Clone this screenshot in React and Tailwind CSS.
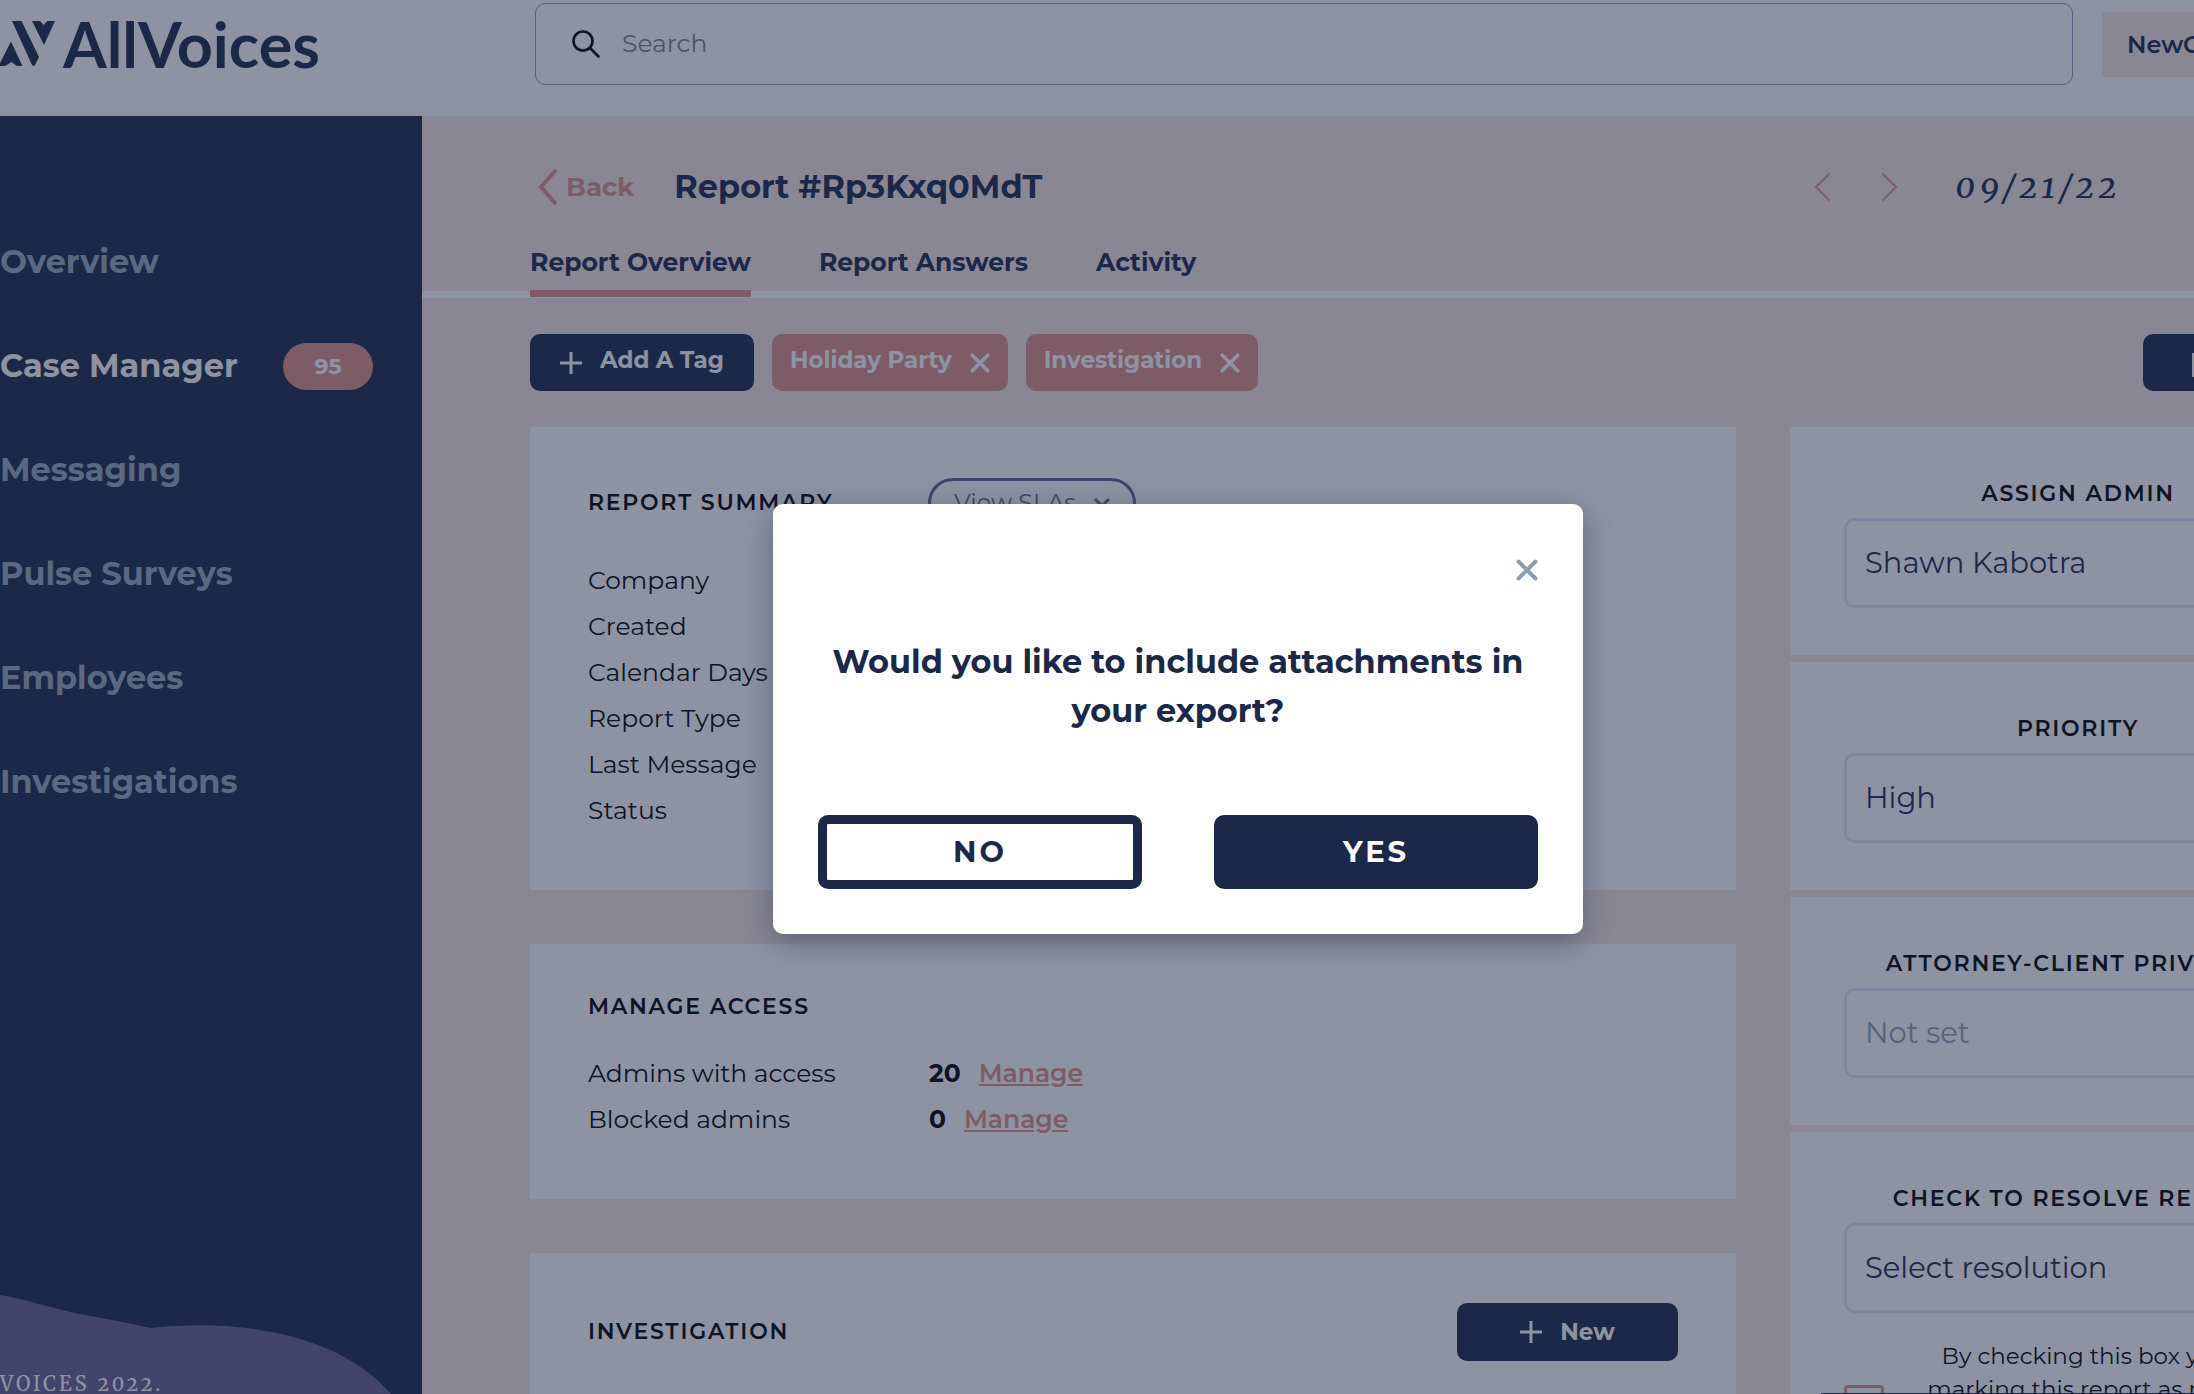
import { useState } from "react";

const navItems = [
  { label: "Overview" },
  { label: "Case Manager", count: 95, active: true },
  { label: "Messaging" },
  { label: "Pulse Surveys" },
  { label: "Employees" },
  { label: "Investigations" },
];

const tabs = ["Report Overview", "Report Answers", "Activity"];

const summaryRows = [
  "Company",
  "Created",
  "Calendar Days",
  "Report Type",
  "Last Message",
  "Status",
];

const accessRows = [
  { label: "Admins with access", value: 20 },
  { label: "Blocked admins", value: 0 },
];

function PlusIcon() {
  return (
    <svg viewBox="0 0 22 22" className="h-[22px] w-[22px]" aria-hidden="true">
      <path d="M11 0V22M0 11H22" stroke="currentColor" strokeWidth="3" />
    </svg>
  );
}

function CrossIcon({ className }) {
  return (
    <svg
      viewBox="0 0 22 22"
      className={className}
      fill="none"
      stroke="currentColor"
      strokeWidth="4"
      strokeLinecap="round"
      aria-hidden="true"
    >
      <path d="M2.5 2.5L19.5 19.5M19.5 2.5L2.5 19.5" />
    </svg>
  );
}

function Logo() {
  return (
    <a href="#home" className="flex items-center gap-2 text-[#1c2848]">
      <svg
        viewBox="0 0 55 45"
        className="h-[45px] w-[55px]"
        fill="currentColor"
        aria-hidden="true"
      >
        <path d="M0 42L11 20.5L22.5 45H17L11.5 41L5 45H0Z" />
        <path d="M12 0H21.5L39 36L35 44Q33.500 46 32 44Z" />
        <path d="M32 0H40L43.500 4L47.500 0H55L44 24Z" />
      </svg>
      <span className="font-['Lato'] text-[63px] leading-none font-bold">
        AllVoices
      </span>
    </a>
  );
}

function Header() {
  return (
    <header className="flex h-[116px] shrink-0 bg-white">
      <div className="w-[535px] shrink-0 pt-3">
        <Logo />
      </div>
      <label className="mt-[3px] flex h-[82px] grow items-center gap-[22px] rounded-[10px] border border-[#8b9db5] pl-9">
        <svg
          viewBox="0 0 28 28"
          className="h-7 w-7"
          fill="none"
          stroke="#000"
          strokeWidth="2.6"
          aria-hidden="true"
        >
          <circle cx="11" cy="11" r="9.5" />
          <path d="M18 18L26.500 26.500" strokeLinecap="round" />
        </svg>
        <input
          type="search"
          aria-label="Search"
          placeholder="Search"
          className="grow text-[25px] outline-none placeholder:text-[#808080]"
        />
      </label>
      <button
        type="button"
        className="mt-3 -mr-[120px] ml-[29px] h-[65px] w-[212px] shrink-0 rounded bg-[#f6e6e0] pl-[25px] text-left text-2xl font-semibold text-[#1c2848]"
      >
        NewCo
      </button>
    </header>
  );
}

function Sidebar() {
  return (
    <aside className="relative w-[422px] shrink-0 overflow-hidden bg-[#1c2848] pt-[94px]">
      <nav>
        {navItems.map((item) => (
          <a
            key={item.label}
            href={"#" + item.label}
            className={
              "flex h-[104px] items-center justify-between pr-[49px] text-[32px] font-bold " +
              (item.active ? "text-white" : "text-[#98a8bc]")
            }
          >
            {item.label}
            {item.count && (
              <span className="flex h-[47px] w-[90px] items-center justify-center rounded-full bg-[#de9088] text-[22px]">
                {item.count}
              </span>
            )}
          </a>
        ))}
      </nav>

      {/* Purple wave behind the copyright */}
      <div className="absolute inset-x-0 bottom-0 h-[99px]">
        <svg
          viewBox="0 0 422 99"
          className="absolute inset-0 h-full w-full"
          aria-hidden="true"
        >
          <path
            d="M0 0C30 5 50 13 80 19C105 24 130 28 150 33C255 22 345 45 391 99H0Z"
            fill="#6a6090"
          />
        </svg>
        <p className="absolute bottom-0 left-0 font-['Merriweather','Liberation_Serif',serif] text-xl leading-none tracking-[3px] text-white oldstyle-nums">
          VOICES 2022.
        </p>
      </div>
    </aside>
  );
}

function ReportHeader() {
  return (
    <div className="border-b-[7px] border-white pl-[108px]">
      <div className="flex h-[130px] items-center pt-3">
        <a
          href="#reports"
          className="ml-2 flex items-center gap-2 text-[26px] font-bold text-[#de9088]"
        >
          <svg
            viewBox="0 0 20 36"
            className="h-9 w-5"
            fill="none"
            stroke="currentColor"
            strokeWidth="4"
            aria-hidden="true"
          >
            <path d="M18 1L3 18L18 35" />
          </svg>
          Back
        </a>
        <h1 className="ml-10 text-[32px] font-bold text-[#1c2848]">
          Report #Rp3Kxq0MdT
        </h1>
        <div className="ml-auto flex items-center pr-[73px]">
          <button type="button" aria-label="Previous report" className="text-[#de9088]">
            <svg viewBox="0 0 16 28" className="h-7 w-4" fill="none" stroke="currentColor" strokeWidth="2" strokeLinecap="round">
              <path d="M15 1L2 14L15 27" />
            </svg>
          </button>
          <button type="button" aria-label="Next report" className="ml-[52px] text-[#de9088]">
            <svg viewBox="0 0 16 28" className="h-7 w-4" fill="none" stroke="currentColor" strokeWidth="2" strokeLinecap="round">
              <path d="M1 1L14 14L1 27" />
            </svg>
          </button>
          <time className="ml-[58px] font-['Merriweather','Liberation_Serif',serif] text-[32px] font-medium tracking-[5px] text-[#1c2848] italic oldstyle-nums">
            09/21/22
          </time>
        </div>
      </div>
      <div role="tablist" className="flex gap-[68px]">
        {tabs.map((tab, i) => (
          <button
            key={tab}
            type="button"
            role="tab"
            aria-selected={i === 0}
            className={
              "-mb-[6px] h-[51px] border-b-[7px] pb-3 text-[25px] leading-8 font-bold text-[#1c2848] " +
              (i === 0 ? "border-[#de9088]" : "border-transparent")
            }
          >
            {tab}
          </button>
        ))}
      </div>
    </div>
  );
}

function Tag({ label }) {
  return (
    <span className="flex h-[57px] items-center gap-[18px] rounded-[10px] bg-[#de9088] px-[18px] text-[23px] font-bold text-white">
      <span className="pb-1">{label}</span>
      <button type="button" aria-label={"Remove " + label}>
        <CrossIcon className="h-5 w-5" />
      </button>
    </span>
  );
}

function TagBar() {
  return (
    <div className="flex gap-[18px]">
      <button
        type="button"
        className="flex h-[57px] items-center gap-[18px] rounded-[10px] bg-[#1c2848] px-[30px] text-[23px] font-bold text-white"
      >
        <PlusIcon />
        <span className="pb-1">Add A Tag</span>
      </button>
      <Tag label="Holiday Party" />
      <Tag label="Investigation" />
      <button
        type="button"
        aria-label="Export"
        className="ml-auto h-[57px] w-[223px] rounded-[10px] bg-[#1c2848] pl-[49px] text-white"
      >
        <svg viewBox="0 0 24 24" className="mt-1 h-6 w-6" fill="none" stroke="currentColor" strokeWidth="3">
          <rect x="1" y="1" width="22" height="22" />
        </svg>
      </button>
    </div>
  );
}

function CardTitle({ children }) {
  return (
    <h2 className="text-[22px] leading-8 font-semibold tracking-[0.08em] text-black uppercase">
      {children}
    </h2>
  );
}

function SidePanel({ title, value, muted, children }) {
  return (
    <section className="bg-white px-[54px] pt-[51px] pb-[47px]">
      <label className="block text-center text-[22px] leading-8 font-semibold tracking-[0.08em] text-black uppercase">
        {title}
        <select
          className={
            "mt-2 block h-[90px] w-full appearance-none rounded-[10px] border-[3px] border-[#dee4f6] px-[18px] text-[29px] font-normal tracking-normal " +
            (muted ? "text-[#8b9db5]" : "text-[#1c2848]")
          }
        >
          <option>{value}</option>
        </select>
      </label>
      {children}
    </section>
  );
}

function Report() {
  return (
    <main className="min-w-0 grow bg-[#f6e6e0]">
      <ReportHeader />
      {/* Columns run past the right edge of the window */}
      <div className="-mr-[172px] pt-9 pl-[108px]">
        <TagBar />
        <div className="mt-9 flex gap-[54px]">
          <div className="flex min-w-0 grow flex-col gap-[54px]">
            <section className="bg-white px-[58px] pt-[51px] pb-[57px]">
              <div className="flex h-[50px] items-center">
                <div className="w-[340px]">
                  <CardTitle>Report Summary</CardTitle>
                </div>
                <button
                  type="button"
                  className="flex h-[50px] w-[208px] items-center justify-center gap-[18px] rounded-full border-[3px] border-[#6a6090] text-2xl text-[#6a6090]"
                >
                  View SLAs
                  <svg viewBox="0 0 16 10" className="h-[10px] w-4" fill="none" stroke="currentColor" strokeWidth="3">
                    <path d="M1 1L8 8L15 1" />
                  </svg>
                </button>
              </div>
              <dl className="mt-[29px] text-[25px] leading-[46px] text-black">
                {summaryRows.map((row) => (
                  <dt key={row}>{row}</dt>
                ))}
              </dl>
            </section>

            <section className="bg-white px-[58px] pt-[47px] pb-[57px]">
              <CardTitle>Manage Access</CardTitle>
              <dl className="mt-[27px] text-[25px] leading-[46px] text-black">
                {accessRows.map((row) => (
                  <div key={row.label} className="flex">
                    <dt className="w-[341px]">{row.label}</dt>
                    <dd className="flex gap-[18px]">
                      <b className="font-bold">{row.value}</b>
                      <a href="#manage" className="font-semibold text-[#de9088] underline">
                        Manage
                      </a>
                    </dd>
                  </div>
                ))}
              </dl>
            </section>

            <section className="flex items-center justify-between bg-white px-[58px] pt-[50px] pb-[60px]">
              <CardTitle>Investigation</CardTitle>
              <button
                type="button"
                className="flex h-[58px] w-[221px] items-center justify-center gap-[18px] rounded-[10px] bg-[#1c2848] text-[23px] font-bold text-white"
              >
                <PlusIcon />
                New
              </button>
            </section>
          </div>

          <div className="flex w-[576px] shrink-0 flex-col gap-[7px]">
            <SidePanel title="Assign Admin" value="Shawn Kabotra" />
            <SidePanel title="Priority" value="High" />
            <SidePanel title="Attorney-Client Privilege" value="Not set" muted />
            <SidePanel title="Check to Resolve Report" value="Select resolution">
              <label className="mt-[27px] flex items-start gap-4 text-center text-[23px] leading-[33px] text-black">
                <input
                  type="checkbox"
                  className="mt-[45px] h-10 w-10 shrink-0 appearance-none rounded border-[3px] border-[#de9088]"
                />
                <span className="grow">
                  By checking this box you are
                  <br />
                  marking this report as resolved
                </span>
              </label>
            </SidePanel>
          </div>
        </div>
      </div>
    </main>
  );
}

function ExportDialog({ onClose }) {
  return (
    <div className="absolute inset-0 flex items-center justify-center bg-[#1c2848]/50 pt-11 pl-[162px]">
      <div
        role="dialog"
        aria-modal="true"
        aria-labelledby="export-title"
        className="w-[810px] rounded-[10px] bg-white p-[45px] shadow-[0_8px_30px_rgba(28,40,72,0.4)]"
      >
        <div className="flex justify-end pt-[10px]">
          <button type="button" aria-label="Close" onClick={onClose} className="text-[#8b9db5]">
            <CrossIcon className="h-[22px] w-[22px]" />
          </button>
        </div>
        <h2
          id="export-title"
          className="mt-14 text-center text-[32px] leading-[49px] font-bold text-[#1c2848]"
        >
          Would you like to include attachments in your export?
        </h2>
        <div className="mt-20 flex gap-[72px] text-[29px] font-bold tracking-[3px]">
          <button
            type="button"
            onClick={onClose}
            className="h-[74px] flex-1 rounded-[10px] border-[9px] border-[#1c2848] text-[#1c2848]"
          >
            NO
          </button>
          <button
            type="button"
            onClick={onClose}
            className="h-[74px] flex-1 rounded-[10px] border-[9px] border-[#1c2848] bg-[#1c2848] text-white"
          >
            YES
          </button>
        </div>
      </div>
    </div>
  );
}

export default function App() {
  const [open, setOpen] = useState(true);

  return (
    <div className="relative flex h-screen flex-col overflow-hidden font-['Montserrat','Inter',sans-serif]">
      <Header />
      <div className="flex min-h-0 grow overflow-hidden">
        <Sidebar />
        <Report />
      </div>
      {/* Top edge of the docked chat bar */}
      <div className="absolute right-0 bottom-0 h-px w-[17%] bg-[#1c2848]" />
      {open && <ExportDialog onClose={() => setOpen(false)} />}
    </div>
  );
}
